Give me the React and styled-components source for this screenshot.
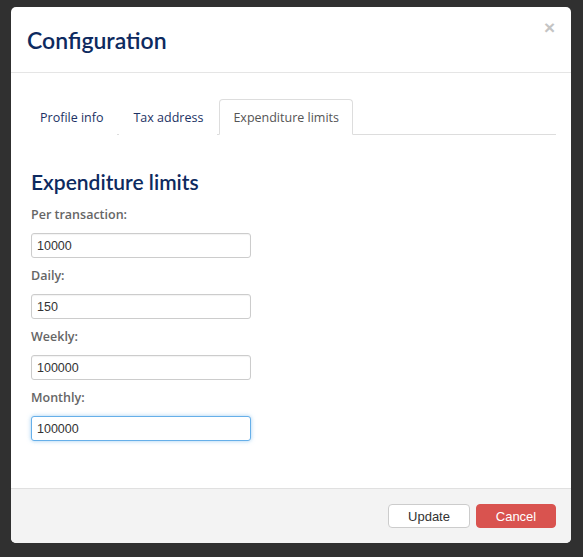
import React, { useState } from 'react'
import styled, { createGlobalStyle } from 'styled-components'

const GlobalStyle = createGlobalStyle`
    html, body {
        margin: 0;
        background: #303030;
    }
    body {
        padding: 7px 0 0 11px;
        font-family: "Open Sans", "Liberation Sans", sans-serif;
    }
`

const Modal = styled.div`
    width: 560px;
    height: 536px;
    background: #fff;
    border-radius: 5px;
    display: flex;
    flex-direction: column;
    overflow: hidden;
`

const Header = styled.div`
    position: relative;
    height: 65px;
    border-bottom: 1px solid #e5e5e5;
    display: flex;
    align-items: center;
    padding: 0 16px;
`

const Title = styled.h1`
    margin: 0;
    font-family: "Lato", sans-serif;
    font-weight: 600;
    font-size: 23px;
    color: #0d2a60;
`

const Close = styled.span`
    position: absolute;
    right: 16px;
    top: 10px;
    font-family: "Liberation Sans", sans-serif;
    font-weight: 700;
    font-size: 19px;
    color: #c4c4c4;
`

const Body = styled.div`
    flex: 1;
    padding: 26px 15px 0;
`

const Tabs = styled.ul`
    list-style: none;
    margin: 0;
    padding: 0;
    display: flex;
    border-bottom: 1px solid #ddd;
`

const Tab = styled.li`
    height: 34px;
    margin: 0 2px -1px 0;
    padding: 0 13px;
    display: flex;
    align-items: center;
    font-size: 12.5px;
    color: ${p => (p.$active ? '#555' : '#1c3264')};
    background: #fff;
    border: 1px solid ${p => (p.$active ? '#ddd' : 'transparent')};
    border-bottom-color: ${p => (p.$active ? '#fff' : 'transparent')};
    border-radius: 4px 4px 0 0;
`

const Pane = styled.div`
    padding: 35px 5px 0;
`

const Heading = styled.h2`
    margin: 0 0 12px;
    font-family: "Lato", sans-serif;
    font-weight: 600;
    font-size: 21px;
    line-height: 24px;
    color: #0d2a60;
`

const Field = styled.div`
    display: flex;
    flex-direction: column;
    margin-bottom: 9px;
`

const Label = styled.label`
    font-size: 12.5px;
    font-weight: 600;
    color: #666;
    line-height: 18px;
    margin-bottom: 9px;
`

const Input = styled.input`
    box-sizing: border-box;
    width: 220px;
    height: 25px;
    padding: 0 5px;
    font-family: "Liberation Sans", sans-serif;
    font-size: 12.5px;
    color: #333;
    border: 1px solid ${p => (p.$focus ? '#66afe9' : '#ccc')};
    border-radius: 3px;
    box-shadow: ${p => (p.$focus ? '0 0 4px rgba(102,175,233,0.6)' : 'inset 0 1px 1px rgba(0,0,0,0.05)')};
    outline: none;
`

const Footer = styled.div`
    height: 54px;
    border-top: 1px solid #e0e0e0;
    background: #f3f3f3;
    display: flex;
    justify-content: flex-end;
    align-items: center;
    gap: 6px;
    padding: 0 15px;
`

const Button = styled.button`
    height: 24px;
    width: ${p => p.$w}px;
    font-family: "Liberation Sans", sans-serif;
    font-size: 13px;
    border-radius: 4px;
    border: 1px solid ${p => (p.$danger ? '#d9534f' : '#ccc')};
    background: ${p => (p.$danger ? '#d9534f' : '#fff')};
    color: ${p => (p.$danger ? '#fff' : '#333')};
`

const fields = [
    { label: 'Per transaction:', value: '10000' },
    { label: 'Daily:', value: '150' },
    { label: 'Weekly:', value: '100000' },
    { label: 'Monthly:', value: '100000', focus: true },
]

export default function App() {
    const [values, setValues] = useState(fields.map(f => f.value))

    return (
        <>
            <GlobalStyle />
            <Modal>
                <Header>
                    <Title>Configuration</Title>
                    <Close>×</Close>
                </Header>
                <Body>
                    <Tabs>
                        <Tab>Profile info</Tab>
                        <Tab>Tax address</Tab>
                        <Tab $active>Expenditure limits</Tab>
                    </Tabs>
                    <Pane>
                        <Heading>Expenditure limits</Heading>
                        {fields.map((f, i) => (
                            <Field key={f.label}>
                                <Label>{f.label}</Label>
                                <Input
                                    $focus={f.focus}
                                    value={values[i]}
                                    onChange={e => setValues(values.map((v, j) => (j === i ? e.target.value : v)))}
                                />
                            </Field>
                        ))}
                    </Pane>
                </Body>
                <Footer>
                    <Button $w={82}>Update</Button>
                    <Button $w={80} $danger>Cancel</Button>
                </Footer>
            </Modal>
        </>
    )
}
